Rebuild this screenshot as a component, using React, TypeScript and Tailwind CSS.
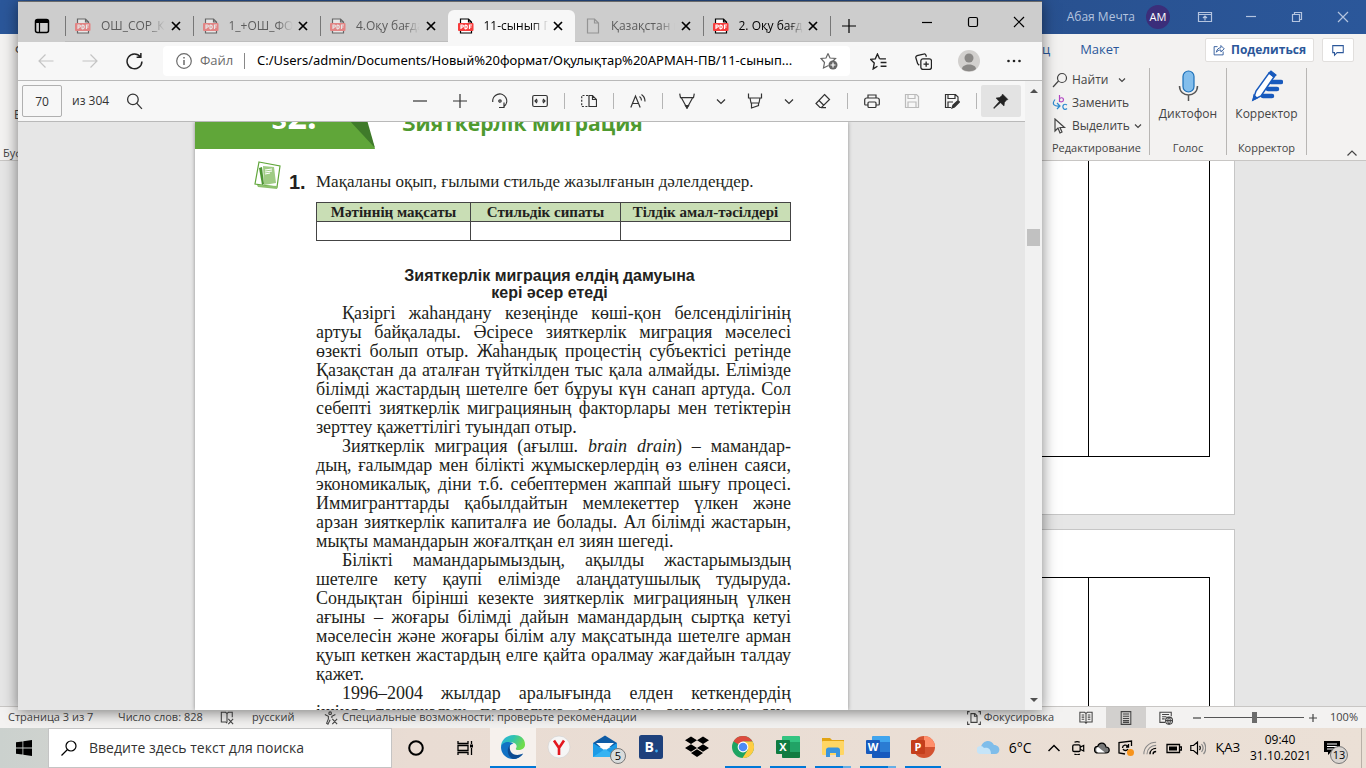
import type { ReactNode } from 'react'
import clsx from 'clsx'

type IconProps = { children: ReactNode; className?: string; box?: string }

function Icon({ children, className = 'w-4 h-4', box = '0 0 16 16' }: IconProps) {
  return (
    <svg viewBox={box} className={clsx('shrink-0', className)} fill="none" stroke="currentColor" strokeWidth="1.2" aria-hidden="true">
      {children}
    </svg>
  )
}

/* ---------- Word (background window) ---------- */

const windowButtons = [
  { label: 'Параметры отображения ленты', shape: <path d="M1.5 3.5h13v9h-13zM1.500 5.500h13M8 11.500V7M6 9l2-2 2 2" /> },
  { label: 'Свернуть окно Word', shape: <path d="M3 7.500h10" /> },
  { label: 'Восстановить окно Word', shape: <path d="M3.500 5.500h7v7h-7zM5.500 5V3.500h7v7H11" /> },
  { label: 'Закрыть Word', shape: <path d="M3 3l10 10M13 3L3 13" /> },
]

function WordTitleBar() {
  return (
    <div className="flex h-[34px] shrink-0 items-center justify-end bg-linear-to-r from-[#2b579a] via-[#264b85] to-[#2b579a] text-[#b4c4df]">
      <span className="text-xs">Абая Мечта</span>
      <span className="ml-[11px] mr-3 flex h-6 w-6 items-center justify-center rounded-full bg-[#3b2e7a] text-[11px] text-white">AM</span>
      {windowButtons.map(({ label, shape }) => (
        <button key={label} aria-label={label} className="flex h-full w-[46px] items-center justify-center">
          <Icon>{shape}</Icon>
        </button>
      ))}
    </div>
  )
}

function RibbonGroup({ label, className, children }: { label: string; className: string; children: ReactNode }) {
  return (
    <div className={clsx('flex h-[87px] flex-col border-r border-[#b8b6b4]', className)}>
      <div className="flex-1">{children}</div>
      <p className="text-center text-[11px] leading-[14px] text-[#444]">{label}</p>
    </div>
  )
}

function Chevron() {
  return (
    <Icon className="h-2 w-2" box="0 0 8 8">
      <path d="M1 2.500l3 3 3-3" />
    </Icon>
  )
}

function Ribbon() {
  return (
    <div className="flex h-[127px] shrink-0 flex-col border-b border-[#c8c6c4] bg-[#f3f2f1] text-[#444]">
      <div className="flex h-[31px] items-center text-[13px] text-[#2b579a]">
        <span className="w-[1042px] shrink-0 pl-[15px] text-[#444]">Ф</span>
        <span>ц</span>
        <button className="ml-[30px]">Макет</button>
        <div className="ml-auto mr-3 flex gap-2">
          <button className="flex h-6 w-[109px] items-center justify-center gap-1.5 rounded-xs border border-[#e1dfdd] bg-white text-xs font-bold">
            <Icon className="h-3 w-3">
              <path d="M6 3.500H1.500v11h12V10M4.500 11c.5-4 3-6 6-6V2l4.500 4.500-4.500 4V8c-3 0-5 1-6 3z" />
            </Icon>
            Поделиться
          </button>
          <button aria-label="Примечания" className="flex h-6 w-8 items-center justify-center rounded-xs border border-[#e1dfdd] bg-white">
            <Icon className="h-3.5 w-3.5">
              <path d="M2 3h12v8H7l-3 3v-3H2z" />
            </Icon>
          </button>
        </div>
      </div>
      <div className="flex pt-[3px]">
        <div className="flex h-[92px] flex-1 flex-col justify-end gap-6 text-xs leading-[14px]">
          <span className="pl-[14px]">В</span>
          <span className="pl-[3px] text-[11px]">Буф</span>
        </div>
        <RibbonGroup label="Редактирование" className="w-[106px] pl-1 [&>p]:pr-1">
          <div className="flex flex-col text-xs leading-[23px]">
            <button className="flex items-center gap-1 pl-1">
              <Icon className="h-4 w-4"><circle cx="10" cy="6" r="4.500" /><path d="M6.500 9L1 15" /></Icon>
              Найти <span className="ml-1.5"><Chevron /></span>
            </button>
            <button className="flex items-center gap-1 pl-1">
              <Icon className="h-4 w-4">
                <path stroke="#b146c2" d="M7.500 0v7M7.500 4c1-2 4-1.500 4 .7S8.500 7.500 7.500 6" />
                <path stroke="#2e8bd0" d="M15 10c-3-2-4.500.5-4 2.500s2.500 2.500 4 1M3 4.500c-4 5 0 7 4.500 6.500M5 8l3 3-3 3" />
              </Icon>
              Заменить
            </button>
            <button className="flex items-center gap-1 pl-1">
              <Icon className="h-4 w-4"><path d="M3 1v12l3-3 2 5 2-1-2-4.500h4.500z" /></Icon>
              <span>Выделить</span><Chevron />
            </button>
          </div>
        </RibbonGroup>
        <RibbonGroup label="Голос" className="w-[77px]">
          <button className="flex w-full flex-col items-center gap-1 pt-0.5 text-xs">
            <Icon className="h-8 w-6" box="0 0 24 32">
              <rect x="7" y="1" width="11" height="21" rx="5.500" fill="#83beec" stroke="#1a6fb8" />
              <path d="M3.500 16c0 12 18 12 18 0M12.500 25v6" stroke="#555" strokeWidth="1.500" />
            </Icon>
            Диктофон
          </button>
        </RibbonGroup>
        <RibbonGroup label="Корректор" className="w-20">
          <button className="flex w-full flex-col items-center gap-1 pt-0.5 text-xs">
            <Icon className="h-8 w-8" box="0 0 32 32">
              <path d="M20 12h10M17 19h9M12 26h9" stroke="#185abd" strokeWidth="4.500" strokeLinecap="round" />
              <path d="M2 30l3-9L18 3l5 4L10 26z" fill="#fff" stroke="#185abd" strokeWidth="1.500" />
              <path d="M18 3l2-2 5 4-2 2zM2 30l1-5 3 3z" fill="#185abd" stroke="#185abd" />
            </Icon>
            Корректор
          </button>
        </RibbonGroup>
        <button aria-label="Свернуть ленту" className="flex w-[59px] items-end justify-end pb-px pr-2 text-[#444]">
          <Icon className="h-3 w-3" box="0 0 12 12"><path d="M1.500 8.500L6 4l4.500 4.500" /></Icon>
        </button>
      </div>
    </div>
  )
}

function WordDocument() {
  return (
    <div className="flex min-h-0 flex-1 flex-col items-end gap-[14px] overflow-hidden bg-[#e6e6e6] pr-[131px]">
      <div className="h-[354px] w-[794px] shrink-0 border-x border-b border-[#c6c6c6] bg-white pr-6">
        <div className="ml-auto flex h-[296px] w-[656px] justify-end border-x border-b border-black">
          <div className="w-[121px] border-l border-black" />
        </div>
      </div>
      <div className="h-[400px] w-[794px] shrink-0 border border-[#c6c6c6] bg-white pr-6 pt-[47px]">
        <div className="ml-auto flex h-full w-[656px] justify-end border-x border-t border-black">
          <div className="w-[121px] border-l border-black" />
        </div>
      </div>
    </div>
  )
}

function WordStatusBar() {
  return (
    <div className="flex h-[22px] shrink-0 items-center border-t border-[#c8c6c4] bg-[#f3f2f1] text-[11px] text-[#444]">
      <span className="w-[110px] shrink-0 pl-2">Страница 3 из 7</span>
      <span className="w-[110px] shrink-0 pl-2">Число слов: 828</span>
      <Icon className="h-3.5 w-3.5"><path d="M8 13V3L6.500 1.500h-5v11h5L8 14M8 3l1.500-1.500H14V7M9.500 9l5.500 6M15 9l-5.500 6" /></Icon>
      <span className="w-[90px] shrink-0 pl-[18px]">русский</span>
      <Icon className="h-3.5 w-3.5"><circle cx="7" cy="2.500" r="1.500" /><path d="M1 4l4 2v3l-2 5 1.500 1L7 10M13 4L9 6v2M9.500 9l5.500 6M15 9l-5.500 6" /></Icon>
      <span className="pl-1">Специальные возможности: проверьте рекомендации</span>
      <div className="ml-auto flex h-full items-center">
        <button className="mr-3 flex items-center gap-[3px]">
          <Icon className="h-3.5 w-3.5"><path d="M3 .7H.7V4M13 .7h2.300V4M3 15.300H.7V12M13 15.300h2.300V12M4.500 3h4.500l2.500 2.500V13h-7zM8.500 3v3h3" /></Icon>
          Фокусировка
        </button>
        <button aria-label="Режим чтения" className="flex h-full w-10 items-center justify-center">
          <Icon className="h-3.5 w-3.5"><path d="M8 3v11M8 3L6.500 1.500H1v11h5.500L8 14l1.500-1.500H15v-11H9.500zM3 4.500h3M3 7h3M3 9.500h3M10 4.500h3M10 7h3M10 9.500h3" /></Icon>
        </button>
        <button aria-label="Разметка страницы" className="flex h-full w-10 items-center justify-center bg-[#d2d0ce]">
          <Icon className="h-3.5 w-3.5"><path d="M2.500.7h11v14.600h-11zM4.500 3.500h7M4.500 6h7M4.500 8.500h7M4.500 11h7M4.500 13h7" /></Icon>
        </button>
        <button aria-label="Веб-документ" className="flex h-full w-10 items-center justify-center">
          <Icon className="h-3.5 w-3.5"><path d="M7 13H1V1.500h13V6M3.500 4h8M3.500 6.500h5M3.500 9h3" /><circle cx="11.500" cy="11" r="4" /><path d="M7.500 11h8M11.500 7c-2 2-2 6 0 8 2-2 2-6 0-8" /></Icon>
        </button>
        <button aria-label="Уменьшить" className="ml-1.5 w-3"><Icon className="h-2.5 w-2.5" box="0 0 10 10"><path d="M1 5h8" /></Icon></button>
        <input
          type="range"
          aria-label="Масштаб"
          defaultValue={50}
          className="h-px w-[100px] appearance-none bg-[#555] [&::-webkit-slider-thumb]:h-[11px] [&::-webkit-slider-thumb]:w-[5px] [&::-webkit-slider-thumb]:appearance-none [&::-webkit-slider-thumb]:bg-[#6b6b6b]"
        />
        <button aria-label="Увеличить" className="ml-1 w-3"><Icon className="h-2.5 w-2.5" box="0 0 10 10"><path d="M1 5h8M5 1v8" /></Icon></button>
        <span className="ml-[10px] mr-2">100%</span>
      </div>
    </div>
  )
}

/* ---------- Edge ---------- */

const tabs = [
  { title: 'ОШ_СОР_К', pdf: true, dim: true },
  { title: '1_+ОШ_ФО', pdf: true, dim: true },
  { title: '4.Оқу бағда', pdf: true, dim: true },
  { title: '11-сынып П', pdf: true, active: true },
  { title: 'Қазақстан м', pdf: false, dim: true },
  { title: '2. Оқу бағд', pdf: true },
]

function TabIcon({ pdf }: { pdf: boolean }) {
  if (!pdf) {
    return <Icon><path d="M2.500 1h7l4 4v10h-11zM9.500 1v4h4" /></Icon>
  }
  return (
    <Icon>
      <path d="M2.500 1h8l3 3v11h-11zM10.500 1v3h3" stroke="#000" fill="#fff" />
      <rect x="0" y="5" width="15.500" height="8" rx="1" fill="#f73d3d" stroke="none" />
      <path d="M3 11V7h1.300c1.500 0 1.500 2.200 0 2.200H3M7 7v4M7 7c3-.3 3 4.200 0 4M11.500 11V7H14M11.500 9H13.500" stroke="#fff" />
    </Icon>
  )
}

function TabStrip() {
  return (
    <div className="flex h-[41px] shrink-0 items-end border-t border-[#6b6b6b] bg-[#cdcdcd]">
      <button aria-label="Меню вкладок" className="flex h-8 w-[47px] items-center justify-center text-black">
        <Icon><rect x="1.500" y="1.500" width="13" height="13" rx="2" strokeWidth="1.500" /><path d="M1.500 3.500h13" strokeWidth="3" /><path d="M5.500 4v10" /></Icon>
      </button>
      <div className="grid w-[765px] grid-cols-6">
        {tabs.map(({ title, pdf, dim, active }, i) => (
          <div
            key={title}
            className={clsx(
              'flex h-8 items-center pr-3',
              active ? 'rounded-t-md bg-[#f7f7f7]' : 'border-b border-[#bdbdbd]',
              dim ? 'text-[#5c5c5c]' : 'text-black',
            )}
          >
            <span className={clsx('h-5 w-px', i !== 3 && i !== 4 && 'bg-[#777]')} />
            <span className={clsx('ml-[9px]', dim && 'opacity-50')}><TabIcon pdf={pdf} /></span>
            <span className="ml-[10px] w-16 overflow-hidden whitespace-nowrap text-xs [mask-image:linear-gradient(to_right,black_75%,transparent)]">{title}</span>
            <button aria-label={`Закрыть ${title}`} className="ml-auto text-black">
              <Icon className="h-2.5 w-2.5" box="0 0 10 10"><path d="M1 1l8 8M9 1L1 9" strokeWidth="1.700" /></Icon>
            </button>
          </div>
        ))}
      </div>
      <span className="mb-1.5 h-5 w-px bg-[#777]" />
      <button aria-label="Новая вкладка" className="ml-2.5 flex h-8 items-center text-black">
        <Icon><path d="M8 1v14M1 8h14" /></Icon>
      </button>
      <div className="ml-auto flex self-start text-black">
        <button aria-label="Свернуть" className="flex h-10 w-[46px] items-center justify-center"><Icon className="h-3 w-3" box="0 0 12 12"><path d="M1 6.500h10" /></Icon></button>
        <button aria-label="Развернуть" className="flex h-10 w-[46px] items-center justify-center"><Icon className="h-3 w-3" box="0 0 12 12"><rect x="1.500" y="1.500" width="9" height="9" rx="1.500" /></Icon></button>
        <button aria-label="Закрыть" className="flex h-10 w-[46px] items-center justify-center"><Icon className="h-3 w-3" box="0 0 12 12"><path d="M1 1l10 10M11 1L1 11" /></Icon></button>
      </div>
    </div>
  )
}

function NavBar() {
  return (
    <div className="flex h-[39px] shrink-0 items-center border-b border-[#b9b9b9] bg-[#f7f7f7] text-[#222]">
      <button aria-label="Назад" className="ml-5 mr-7 text-[#c4c4c4]"><Icon><path d="M15.500 8H1M7.500 1.500L1 8l6.500 6.500" /></Icon></button>
      <button aria-label="Вперед" className="mr-7 text-[#c4c4c4]"><Icon><path d="M.5 8H15M8.500 1.500L15 8l-6.500 6.500" /></Icon></button>
      <button aria-label="Обновить" className="mr-5">
        <Icon className="h-[17px] w-[17px]"><path d="M13.500 3.500A7 7 0 1 0 15 8M14 0v4h-4" strokeWidth="1.400" /></Icon>
      </button>
      <div className="flex h-[30px] flex-1 items-center rounded-sm bg-white pl-[13px] pr-3">
        <Icon className="h-4 w-4 text-[#6b6b6b]"><circle cx="8" cy="8" r="7.300" /><path d="M8 7v5M8 4v1.500" strokeWidth="1.500" /></Icon>
        <label htmlFor="address" className="ml-2 w-11 text-[13px] text-[#6b6b6b]">Файл</label>
        <span className="mr-3 h-4 w-px bg-[#888]" />
        <input
          id="address"
          readOnly
          value="C:/Users/admin/Documents/Новый%20формат/Оқулықтар%20АРМАН-ПВ/11-сынып..."
          className="min-w-0 flex-1 font-['Noto_Sans',sans-serif] text-[13px] text-black outline-none"
        />
        <button aria-label="Добавить в избранное" className="text-[#666]">
          <Icon className="h-[18px] w-[18px]" box="0 0 18 18">
            <path d="M8 1.500l2 4.500 5.500.5-3 3M8 1.500L6 6l-5 .5 3.500 4L3.500 16l5-2.500" />
            <circle cx="13" cy="13" r="4.500" fill="currentColor" stroke="none" />
            <path d="M13 10.500v5M10.500 13h5" stroke="#fff" />
          </Icon>
        </button>
      </div>
      <button aria-label="Избранное" className="ml-5 mr-7">
        <Icon className="h-[17px] w-[17px]"><path d="M9 5.500L7 1 5 5.500l-4.500.5L4 9.500 3 15l4-2.500M9 5.500h6M10 9h5.500M10 12.500h5.500" strokeWidth="1.300" /></Icon>
      </button>
      <button aria-label="Коллекции" className="mr-[26px]">
        <Icon className="h-[17px] w-[17px]"><rect x="5.500" y="5.500" width="10" height="10" rx="2" /><path d="M10.500 8v5M8 10.500h5M4 11.500L2.500 10 .8 4.500C.5 3.500 1 3 2 2.500L8 1c1-.3 2 .2 2.300 1l.4 1.500" /></Icon>
      </button>
      <button aria-label="Профиль" className="mr-[26px]">
        <Icon className="h-[22px] w-[22px]" box="0 0 22 22">
          <circle cx="11" cy="11" r="11" fill="#d2d0ce" stroke="none" />
          <circle cx="11" cy="8" r="4.500" fill="#8a8886" stroke="none" />
          <path d="M4 19c0-6 14-6 14 0-3 3-11 3-14 0z" fill="#8a8886" stroke="none" />
        </Icon>
      </button>
      <button aria-label="Настройки и прочее" className="mr-5">
        <Icon><g fill="#222" stroke="none"><circle cx="2.500" cy="8" r="1.300" /><circle cx="8" cy="8" r="1.300" /><circle cx="13.500" cy="8" r="1.300" /></g></Icon>
      </button>
    </div>
  )
}

type Tool = { label: string; shape: ReactNode; width?: 'narrow'; tone?: string }
const chevronTool = (label: string): Tool => ({ label, shape: <path d="M4 6.500l4 4 4-4" />, width: 'narrow' })

const tools: (Tool | null)[] = [
  { label: 'Уменьшить', shape: <path d="M1 8h14" /> },
  { label: 'Увеличить', shape: <path d="M1 8h14M8 1v14" /> },
  { label: 'Повернуть', shape: <><path d="M.8 9A7 7 0 1 1 12 13.500M12 9.500v5h-5" /><circle cx="8" cy="8" r="1.200" /></> },
  { label: 'По ширине', shape: <><rect x=".7" y="2.500" width="14.600" height="11" rx="1.500" /><path d="M3 8h3M10 8h3M5 6L3 8l2 2M11 6l2 2-2 2" /></> },
  null,
  { label: 'Вид страницы', shape: <><path d="M8 2.500h3.500l4 4v7H8zM11.500 2.500v4h4" /><path d="M7 2.500H.7v11H7" strokeDasharray="2 1.500" /></> },
  null,
  { label: 'Прочесть вслух', shape: <path d="M.8 14.500L5.500 3l4.700 11.500M2.500 10.500h6M9.500 3.500c1.500 1 2 2 2 4M11.500 1.500c2.300 1.500 3.500 4 3.500 7" /> },
  null,
  { label: 'Рисовать', shape: <><path d="M.7.7l.8 4h13l.8-4M2.500 5L8 15l5.500-10" /><path d="M6.500 12.500h3L8 15z" fill="currentColor" /></> },
  chevronTool('Параметры пера'),
  { label: 'Выделить', shape: <path d="M1.500.5v4.500h13V.5M3 5l1 5h8l1-5M4.500 10v5l7-2.500V10" /> },
  chevronTool('Параметры выделения'),
  { label: 'Стереть', shape: <path d="M9.500 1.500l5 5-8 8H5L1 10.500zM4 7.500l5 5M6 14.700h5" /> },
  null,
  { label: 'Печать', shape: <><path d="M4 5V2h8v3M4 12H1.500c-.5 0-.8-.5-.8-1V7c0-1 .7-2 2-2h10.600c1.300 0 2 1 2 2v4c0 .5-.3 1-.8 1H12" /><rect x="4" y="9" width="8" height="5.500" rx="1" /></> },
  { label: 'Сохранить', shape: <path d="M1.500 1.500h11l2 2v11h-13zM4 1.500v4h7v-4M4 14.500V9h8v5.500" />, tone: 'text-[#bbb]' },
  { label: 'Сохранить как', shape: <><path d="M7 14.500H1.500v-13h10l2.500 2.500v3M4 1.500v4h7v-4M4 14.500V9h5" /><path d="M8 15l1-3 5-4.500 1.500 1.500-5 5z" fill="currentColor" /></> },
  null,
]

function PdfToolbar() {
  return (
    <div className="flex h-[41px] shrink-0 items-center border-b border-[#b9b9b9] bg-[#f7f7f7] pl-1 pr-1 text-xs text-[#333]">
      <input aria-label="Номер страницы" defaultValue="70" className="h-8 w-10 rounded-xs border border-[#b0b0b0] bg-[#f7f7f7] text-center outline-none" />
      <span className="ml-2.5 w-[54px]">из 304</span>
      <button aria-label="Найти"><Icon className="h-[17px] w-[17px]"><circle cx="6.500" cy="6" r="5" /><path d="M10 9.500l5 5.500" /></Icon></button>
      <div className="ml-auto flex items-center">
        {tools.map((tool, i) =>
          tool ? (
            <button
              key={tool.label}
              aria-label={tool.label}
              className={clsx('flex h-8 items-center justify-center', tool.width === 'narrow' ? 'w-7' : 'w-10', tool.tone)}
            >
              <Icon>{tool.shape}</Icon>
            </button>
          ) : (
            <span key={i} className="mx-1 h-4 w-px bg-[#b5b5b5]" />
          ),
        )}
        <button aria-label="Закрепить панель" className="flex h-8 w-10 items-center justify-center rounded-xs bg-[#e3e3e3]">
          <Icon><path d="M9.500 1l5.500 5.500-1.500.5-2 2.500-.5 3.500-3.500-3.200L1 15.500l-.5-.5 5.700-6.500L3 5l3.500-.5L9 2.500z" fill="#222" stroke="#222" strokeWidth=".5" /></Icon>
        </button>
      </div>
    </div>
  )
}

const paragraphs: ReactNode[][] = [
  [
    'Қазіргі жаһандану кезеңінде көші-қон белсенділігінің',
    'артуы байқалады. Әсіресе зияткерлік миграция мәселесі',
    'өзекті болып отыр. Жаһандық процестің субъектісі ретінде',
    'Қазақстан да аталған түйткілден тыс қала алмайды. Елімізде',
    'білімді жастардың шетелге бет бұруы күн санап артуда. Сол',
    'себепті зияткерлік миграцияның факторлары мен тетіктерін',
    'зерттеу қажеттілігі туындап отыр.',
  ],
  [
    <>Зияткерлік миграция (ағылш. <i>brain drain</i>) – мамандар-</>,
    'дың, ғалымдар мен білікті жұмыскерлердің өз елінен саяси,',
    'экономикалық, діни т.б. себептермен жаппай шығу процесі.',
    'Иммигранттарды қабылдайтын мемлекеттер үлкен және',
    'арзан зияткерлік капиталға ие болады. Ал білімді жастарын,',
    'мықты мамандарын жоғалтқан ел зиян шегеді.',
  ],
  [
    'Білікті мамандарымыздың, ақылды жастарымыздың',
    'шетелге кету қаупі елімізде алаңдатушылық тудыруда.',
    'Сондықтан бірінші кезекте зияткерлік миграцияның үлкен',
    'ағыны – жоғары білімді дайын мамандардың сыртқа кетуі',
    'мәселесін және жоғары білім алу мақсатында шетелге арман',
    'қуып кеткен жастардың елге қайта оралмау жағдайын талдау',
    'қажет.',
  ],
  [
    '1996–2004 жылдар аралығында елден кеткендердің',
    'ішінде техникалық, педагогика, медицина, экономика, сау-',
  ],
]

// the last paragraph runs on past the visible part of the page
const isJustified = (p: number, i: number) => p === paragraphs.length - 1 || i < paragraphs[p].length - 1

function PdfPage() {
  return (
    <article className="w-[653px] shrink-0 bg-white font-['Liberation_Serif','DejaVu_Serif',serif] text-[#231f20] shadow-[0_0_4px_rgba(0,0,0,0.4)]">
      <header className="relative -mt-10 flex h-[67px] font-['Open_Sans','Noto_Sans',sans-serif] font-bold">
        <svg viewBox="0 0 190 67" className="absolute left-0 top-0 h-[67px] w-[190px]" aria-hidden="true">
          <path d="M0 67V0h158l22 67z" fill="#60a639" />
          <path d="M154 38h18l8 28z" fill="#3f7a2a" />
        </svg>
        <span className="relative w-[207px] pl-[76px] pt-[14px] text-[34px] leading-10 text-white">§2.</span>
        <h1 className="relative pt-[26px] text-[21px] leading-[30px] text-[#4f9a30]">Зияткерлік миграция</h1>
      </header>
      <div className="pl-[121px] pr-[57px]">
        <div className="-ml-[64px] flex h-[53px] items-center pt-3">
          <Icon className="-mt-3 h-8 w-8" box="0 0 32 32">
            <path d="M7 2l21 4-3 21-22-3z" stroke="#60a639" strokeWidth="1.200" />
            <path d="M5 25l1 2 19 2 1-3z" fill="#8cc06c" stroke="none" />
            <path d="M11 6l11 1 2 16-12 2z" fill="#9fcb84" stroke="none" />
            <path d="M7 8l3-1 2 17-2 1z" fill="#4d9433" stroke="none" />
            <path d="M13 10l7-1M13 12l7-1M13 14l5-1" stroke="#fff" />
          </Icon>
          <b className="w-8 pl-[5px] font-['Liberation_Sans_Narrow','Liberation_Sans',sans-serif] text-xl">1.</b>
          <p className="whitespace-nowrap text-[17px]">Мақаланы оқып, ғылыми стильде жазылғанын дәлелдеңдер.</p>
        </div>
        <table className="w-full table-fixed border-collapse text-center text-[15px] leading-[18px]">
          <thead>
            <tr className="h-[19px] bg-[#c9deb5]">
              <th className="w-[154px] border border-[#444] p-0">Мәтіннің мақсаты</th>
              <th className="w-[150px] border border-[#444] p-0">Стильдік сипаты</th>
              <th className="border border-[#444] p-0">Тілдік амал-тәсілдері</th>
            </tr>
          </thead>
          <tbody>
            <tr className="h-[19px]">
              <td className="border border-[#444]" />
              <td className="border border-[#444]" />
              <td className="border border-[#444]" />
            </tr>
          </tbody>
        </table>
        <h2 className="mb-[3px] mt-[26px] pr-2 text-center font-['Liberation_Sans',sans-serif] text-base font-bold leading-[17px]">
          Зияткерлік миграция елдің дамуына
          <br />
          кері әсер етеді
        </h2>
        {paragraphs.map((lines, p) => (
          <p key={p} className="text-[18px] leading-[19px]">
            {lines.map((line, i) => (
              <span
                key={i}
                className={clsx(
                  'block whitespace-nowrap',
                  i === 0 && 'pl-[26px]',
                  isJustified(p, i) && '[text-align-last:justify]',
                )}
              >
                {line}
              </span>
            ))}
          </p>
        ))}
      </div>
    </article>
  )
}

function EdgeWindow() {
  return (
    <section className="absolute bottom-[58px] left-[18px] right-[324px] top-px flex flex-col bg-[#e6e6e6] shadow-[0_2px_14px_rgba(0,0,0,0.5)]">
      <TabStrip />
      <NavBar />
      <div className="flex min-h-0 flex-1">
        <div className="flex min-w-0 flex-1 flex-col">
          <PdfToolbar />
          <div className="flex min-h-0 flex-1 justify-center overflow-hidden">
            <PdfPage />
          </div>
        </div>
        <div className="flex w-[17px] flex-col items-center bg-[#f1f1f1] py-1.5 text-[#505050]">
          <Icon className="h-2 w-2" box="0 0 8 8"><path d="M0 6l4-4 4 4z" fill="currentColor" stroke="none" /></Icon>
          <span className="mt-[134px] h-[17px] w-[13px] bg-[#c1c1c1]" />
          <Icon className="mt-auto h-2 w-2" box="0 0 8 8"><path d="M0 2l4 4 4-4z" fill="currentColor" stroke="none" /></Icon>
        </div>
      </div>
    </section>
  )
}

/* ---------- Taskbar ---------- */

function OfficeIcon({ letter, dark, mid, light, round }: { letter: string; dark: string; mid: string; light: string; round?: boolean }) {
  return (
    <svg viewBox="0 0 24 24" className="h-6 w-6" aria-hidden="true">
      {round ? (
        <>
          <circle cx="13" cy="12" r="11" fill={mid} />
          <path d="M13 1a11 11 0 0 1 11 11H13z" fill={light} />
        </>
      ) : (
        <>
          <rect x="6" y="1" width="18" height="22" rx="1.500" fill={mid} />
          <path d="M6 2.500A1.500 1.500 0 0 1 7.500 1h15A1.500 1.500 0 0 1 24 2.500V7H6z" fill={light} />
          <path d="M6 17h18v4.500a1.500 1.500 0 0 1-1.500 1.500h-15A1.500 1.500 0 0 1 6 21.500z" fill={dark} />
        </>
      )}
      <rect x="0" y="5" width="14" height="14" rx="1" fill={dark} />
      <text x="7" y="16" textAnchor="middle" fontSize="11" fontWeight="700" fill="#fff">{letter}</text>
    </svg>
  )
}

const apps = [
  {
    name: 'Microsoft Edge', state: 'active',
    icon: (
      <svg viewBox="0 0 24 24" className="h-6 w-6" aria-hidden="true">
        <defs>
          <linearGradient id="edgeTop" x1="0" y1="0" x2="1" y2="0.400"><stop offset="0" stopColor="#2bb2e6" /><stop offset="0.500" stopColor="#2fc2b0" /><stop offset="1" stopColor="#6fdc4b" /></linearGradient>
        </defs>
        <path d="M0 12C0-3 24-4 24 9.500c0 4-3.500 5.500-6.500 5.500-3 0-3-1-2.200-2.200C17 9 12 6.500 8 8 3.500 8 1 10 0 12z" fill="url(#edgeTop)" />
        <path d="M0 12C1 6.500 9 5.500 13 9c-4-1-6 4-4 8 2.500 4.500 8 4.500 13 1.500C19.500 22.500 16 24 12 24 5 24 0 18.500 0 12z" fill="#1272c4" />
        <path d="M9 10c-4 4-2.500 12 3 14 4 0 8-2 10.200-5.500C17 21 12 20 10 17c-1.500-2.500-1.500-5-1-7z" fill="#0c4a92" />
      </svg>
    ),
  },
  {
    name: 'Яндекс', state: '',
    icon: (
      <svg viewBox="0 0 24 24" className="h-6 w-6" aria-hidden="true">
        <circle cx="12" cy="12" r="11" fill="#f6f6f6" stroke="#cfcfcf" strokeWidth=".6" />
        <path d="M7 5.500l5 7.500 5-7.500M12 13v7" stroke="#e3171f" strokeWidth="2.600" fill="none" />
      </svg>
    ),
  },
  {
    name: 'Почта', state: '', badge: '5',
    icon: (
      <svg viewBox="0 0 24 24" className="h-6 w-6" aria-hidden="true">
        <path d="M0 8l12-7.500L24 8v4H0z" fill="#0e5ba5" />
        <path d="M3 8h18l-9 8z" fill="#fff" />
        <path d="M0 8l12 7.500L24 8v14H0z" fill="#1d9be6" />
        <path d="M0 22l12-8 12 8z" fill="#35b3f2" />
      </svg>
    ),
  },
  {
    name: 'Booking', state: '',
    icon: (
      <svg viewBox="0 0 24 24" className="h-6 w-6" aria-hidden="true">
        <rect width="24" height="24" rx="2.500" fill="#1e417c" />
        <text x="5.500" y="17" fontSize="14" fontWeight="700" fill="#fff">B</text>
        <circle cx="17.500" cy="16" r="1.400" fill="#3aaaf0" />
      </svg>
    ),
  },
  {
    name: 'Dropbox', state: '',
    icon: (
      <svg viewBox="0 0 24 24" className="h-6 w-6" aria-hidden="true">
        <path d="M6 1.500l6 3.800-6 3.800-6-3.800zM18 1.500l6 3.800-6 3.800-6-3.800zM6 9.200l6 3.800-6 3.800L0 13zM18 9.200l6 3.800-6 3.800-6-3.800zM12 14.300l6 3.800-6 3.800-6-3.800z" fill="#000" />
      </svg>
    ),
  },
  {
    name: 'Chrome', state: 'open',
    icon: (
      <svg viewBox="0 0 24 24" className="h-6 w-6" aria-hidden="true">
        <circle cx="12" cy="12" r="11" fill="#1da462" />
        <path d="M12 12L2.500 6.500A11 11 0 0 1 21.600 6.600H12z" fill="#dd4b3e" />
        <path d="M12 6.600h9.600A11 11 0 0 1 11.500 23L17 14.500z" fill="#ffcd42" />
        <circle cx="12" cy="12" r="5.400" fill="#fff" />
        <circle cx="12" cy="12" r="4.300" fill="#4c8bf5" />
      </svg>
    ),
  },
  { name: 'Excel', state: 'open', icon: <OfficeIcon letter="X" dark="#107c41" mid="#21a366" light="#33c481" /> },
  {
    name: 'Проводник', state: 'many',
    icon: (
      <svg viewBox="0 0 24 24" className="h-6 w-6" aria-hidden="true">
        <path d="M1 3h8l2 2h12v3H1z" fill="#e2a413" />
        <rect x="1" y="6" width="22" height="14" rx="1" fill="#ffd664" />
        <path d="M5 22v-7c0-1.500 1-2.500 2.500-2.500h9c1.500 0 2.500 1 2.500 2.500v7h-4v-4H9v4z" fill="#3a94dc" />
      </svg>
    ),
  },
  { name: 'Word', state: 'many', icon: <OfficeIcon letter="W" dark="#185abd" mid="#2b7cd3" light="#41a5ee" /> },
  { name: 'PowerPoint', state: 'open', icon: <OfficeIcon letter="P" dark="#c43e1c" mid="#d35230" light="#ff8f6b" round /> },
]

function Taskbar() {
  return (
    <footer className="flex h-10 shrink-0 items-stretch bg-linear-to-r from-[#cbd1ce] via-[#e9dcd3] via-30% to-[#ebe0d6] text-black">
      <button aria-label="Пуск" className="flex w-12 items-center justify-center">
        <svg viewBox="0 0 16 16" className="h-4 w-4" aria-hidden="true"><path d="M0 2.300L6.500 1.400v6.200H0zM7.300 1.300L16 0v7.600H7.300zM0 8.400h6.500v6.200L0 13.700zM7.300 8.400H16V16l-8.700-1.300z" /></svg>
      </button>
      <label className="flex w-[344px] items-center gap-3 border border-[#c4c4c4] bg-white pl-3">
        <Icon><circle cx="10" cy="6" r="5" /><path d="M6.500 9.500L.5 15.500" /></Icon>
        <input aria-label="Поиск" placeholder="Введите здесь текст для поиска" className="min-w-0 flex-1 text-sm outline-none placeholder:text-[#333]" />
      </label>
      <button aria-label="Кортана" className="flex w-12 items-center justify-center"><Icon><circle cx="8" cy="8" r="6.800" strokeWidth="2" /></Icon></button>
      <button aria-label="Представление задач" className="flex w-[50px] items-center justify-center">
        <Icon><path d="M1 1v2.500h10V1M1 15v-2.500h10V15M1 5.500h10v5H1zM14.500 1v3M14.500 8v7" strokeWidth="1.300" /><path d="M13 4.500h3v3h-3z" fill="currentColor" stroke="none" /></Icon>
      </button>
      {apps.map(({ name, state, icon, badge }) => (
        <button
          key={name}
          aria-label={name}
          className={clsx('relative flex flex-col items-center', state === 'active' && 'bg-[#f6f1ed]', state === '' || state === 'active' ? 'w-[46px]' : 'w-[45px]')}
        >
          <span className="flex flex-1 items-center">{icon}</span>
          {badge && (
            <span className="absolute bottom-1 right-0.5 flex h-4 w-4 items-center justify-center rounded-full border border-[#777] bg-[#d9dcdc] text-[11px]">{badge}</span>
          )}
          <span className={clsx('flex h-0.5 justify-end', state === 'active' ? 'w-full' : 'w-9', state && 'bg-[#0078d7]')}>
            {state === 'many' && <span className="w-2 bg-[#65aee6]" />}
          </span>
        </button>
      ))}
      <div className="ml-auto flex items-center">
        <button className="mr-2.5 flex items-center gap-2 text-sm">
          <Icon className="h-4 w-6" box="0 0 24 16">
            <path d="M4 14a4 4 0 0 1 0-7C6 0 14-1 17 5c7 0 7 9 1 9z" fill="#7fbdea" stroke="none" />
            <path d="M4 14a4 4 0 1 1 3-6c5-1 7 2 7 6z" fill="#c5e4f8" stroke="none" />
          </Icon>
          6°C
        </button>
        <button aria-label="Скрытые значки" className="flex w-6 justify-center"><Icon className="h-3 w-3" box="0 0 12 12"><path d="M.5 9L6 3.500 11.500 9" strokeWidth="1.500" /></Icon></button>
        <button aria-label="Собрание" className="flex w-6 justify-center"><Icon className="h-3.5 w-3.5"><rect x="2" y="4.500" width="8.500" height="7.500" rx="1.500" strokeWidth="1.500" /><path d="M10.500 7l4-2v6.500l-4-2M4 1.500c2-1 4-1 6 0M4 15c2 1 4 1 6 0" strokeWidth="1.400" /></Icon></button>
        <button aria-label="OneDrive" className="flex w-6 justify-center"><Icon><path d="M4 13a3.300 3.300 0 0 1-.3-6.600C5 2 11 2 12 7c4 0 4.500 6 0 6z" fill="#777" /><path d="M4 12.500a3 3 0 0 1 0-5.500l7 5.500z" fill="#fff" stroke="none" /></Icon></button>
        <button aria-label="Обновления" className="flex w-6 justify-center">
          <Icon><path d="M13.500 6V1L1 2.500V13l6 1M4.500 8c0-3 4-4 5.500-1.500M10.500 4v3H8M10 9c-1 2-4 2-5 0" strokeWidth="1.300" /><circle cx="12.500" cy="12.500" r="3.500" fill="#f7941d" stroke="none" /></Icon>
        </button>
        <button aria-label="Сеть" className="flex w-6 justify-center">
          <Icon className="h-3.5 w-3.5"><path d="M1 15C1 7 7 1.500 15 1.500M4.500 15C4.500 9 9 5 15 5" stroke="#888" /><path d="M8 15c0-4 3-6.500 7-6.500M11.500 15c0-2 1.500-3 3.500-3" strokeWidth="1.500" /></Icon>
        </button>
        <button aria-label="Батарея" className="flex w-6 justify-center"><Icon><path d="M1 4.500h12.500v8H1zM14 7h1.500v3H14" strokeWidth="1.300" /><path d="M3 6.500h8v4H3z" fill="currentColor" stroke="none" /></Icon></button>
        <button aria-label="Громкость" className="flex w-6 justify-center"><Icon><path d="M.8 5.500h2.700L7.500 2v12l-4-3.500H.8zM9.500 6c1 1 1 3 0 4" /><path d="M11.500 4c2 2.500 2 5.500 0 8M13.500 2c3 3.500 3 8.500 0 12" stroke="#888" /></Icon></button>
        <button className="ml-1.5 text-[13px]">ҚАЗ</button>
        <div className="ml-2.5 w-[60px] text-center text-xs leading-4">
          <p>09:40</p>
          <p>31.10.2021</p>
        </div>
        <button aria-label="Центр уведомлений" className="relative ml-[14px] mr-[21px]">
          <Icon className="h-4 w-4"><path d="M0 1h16v11H7l-3 3v-3H0z" fill="currentColor" stroke="none" /><path d="M3 4h10M3 6.500h10M3 9h6" stroke="#fff" /></Icon>
          <span className="absolute -right-2 top-[6px] flex h-[18px] w-[18px] items-center justify-center rounded-full border border-[#777] bg-[#d9d4d0] text-[11px]">13</span>
        </button>
        <span className="mr-1 h-10 w-px bg-[#b9b0a8]" />
      </div>
    </footer>
  )
}

export default function App() {
  return (
    <main className="relative flex h-screen w-full flex-col overflow-hidden font-['Open_Sans','Noto_Sans',sans-serif]">
      <WordTitleBar />
      <Ribbon />
      <WordDocument />
      <WordStatusBar />
      <EdgeWindow />
      <div className="relative flex flex-col">
        <Taskbar />
      </div>
    </main>
  )
}
